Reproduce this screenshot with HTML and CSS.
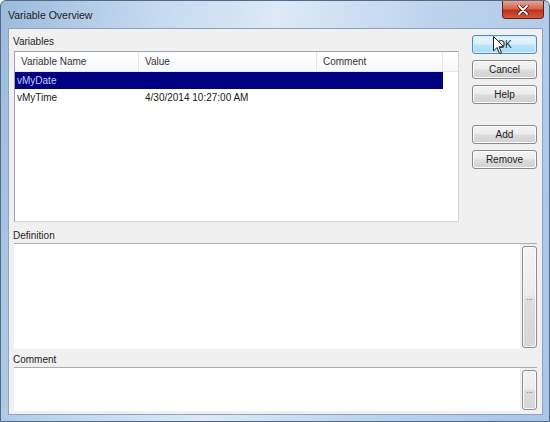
FILE: index.html
```html
<!DOCTYPE html>
<html lang="en">
<head>
    <meta charset="UTF-8">
    <title>Variable Overview</title>
    <link rel="stylesheet" href="styles.css">
</head>
<body>
    <div class="window">
        <div class="titlebar">
            <span class="title">Variable Overview</span>
            <span class="close">
                <svg width="12" height="10" viewBox="0 0 12 10">
                    <path d="M2 1 L10 9 M10 1 L2 9" stroke="#3a1010" stroke-width="3.2" stroke-linecap="round"/>
                    <path d="M2 1 L10 9 M10 1 L2 9" stroke="#fff" stroke-width="1.8" stroke-linecap="round"/>
                </svg>
            </span>
        </div>

        <div class="client">
            <div class="upper">
                <div class="vars">
                    <div class="label">Variables</div>
                    <div class="listview">
                        <div class="lv-header">
                            <div class="col c1">Variable Name</div>
                            <div class="col c2">Value</div>
                            <div class="col c3">Comment</div>
                            <div class="col c4"></div>
                        </div>
                        <div class="lv-row selected">
                            <div class="cell c1">vMyDate</div>
                            <div class="cell c2"></div>
                            <div class="cell c3"></div>
                        </div>
                        <div class="lv-row">
                            <div class="cell c1">vMyTime</div>
                            <div class="cell c2">4/30/2014 10:27:00 AM</div>
                            <div class="cell c3"></div>
                        </div>
                    </div>
                </div>
                <div class="buttons">
                    <button class="btn default">OK</button>
                    <button class="btn">Cancel</button>
                    <button class="btn">Help</button>
                    <button class="btn add">Add</button>
                    <button class="btn">Remove</button>
                </div>
            </div>

            <div class="label section def-label">Definition</div>
            <div class="editor definition">
                <div class="edit-area"></div>
                <div class="edit-side"><button class="dots">...</button></div>
            </div>

            <div class="label section">Comment</div>
            <div class="editor comment">
                <div class="edit-area"></div>
                <div class="edit-side"><button class="dots">...</button></div>
            </div>
        </div>

        <!-- mouse pointer resting on the OK button -->
        <svg class="pointer" width="12" height="19" viewBox="0 0 12 19">
            <path d="M0.5 0.5 L0.5 15 L4 11.5 L6.5 17.5 L8.5 16.6 L6 10.8 L10.8 10.8 Z" fill="#fff" stroke="#222" stroke-width="1" stroke-linejoin="round"/>
        </svg>
    </div>
</body>
</html>
```

FILE: styles.css
```css
body {
    margin: 0;
    padding: 0;
    background-color: #ffffff;
    font-family: "Liberation Sans", Arial, sans-serif;
    font-size: 10px;
    color: #1a1a1a;
}
.window {
    position: relative;
    width: 550px;
    height: 422px;
    box-sizing: border-box;
    border: 1px solid #4e6a8c;
    border-radius: 6px 6px 0 0;
    background: linear-gradient(100deg, #9dbbdc 0%, #c4d9ef 25%, #dde9f6 45%, #bdd3ec 70%, #a9c6e6 100%);
    display: flex;
    flex-direction: column;
}
.titlebar {
    height: 27px;
    display: flex;
    align-items: flex-start;
    justify-content: space-between;
    padding-left: 7px;
}
.title {
    margin-top: 8px;
    font-size: 10.5px;
    color: #1b1b1b;
}
.close {
    width: 42px;
    height: 18px;
    margin-right: 5px;
    box-sizing: border-box;
    border: 1px solid #6b1a10;
    border-top: none;
    border-radius: 0 0 4px 4px;
    background: linear-gradient(#e8a493 0%, #d5644c 45%, #bf3219 55%, #cf5a3c 100%);
    display: flex;
    align-items: center;
    justify-content: center;
}
.client {
    flex: 1;
    margin: 0 6px 6px 7px;
    border: 1px solid #8da2bc;
    background-color: #f0f0f0;
    padding: 0 5px 0 4px;
    display: flex;
    flex-direction: column;
}
.upper {
    display: flex;
    gap: 13px;
}
.vars {
    flex: 1;
    padding-top: 7px;
}
.label {
    height: 12px;
    line-height: 12px;
    color: #1e1e1e;
    margin-bottom: 3px;
}
.section {
    margin-top: 5px;
    margin-bottom: 1px;
}
.def-label {
    margin-top: 8px;
    margin-bottom: 1px;
}
.listview {
    margin-left: 1px;
    height: 171px;
    box-sizing: border-box;
    border: 1px solid #a0a5ad;
    border-right-color: #d6d6d6;
    border-bottom-color: #d6d6d6;
    background-color: #ffffff;
}
.lv-header {
    display: flex;
    height: 19px;
    border-bottom: 1px solid #e4e6ea;
    background: linear-gradient(#ffffff, #f7f8fa);
}
.lv-header .col {
    box-sizing: border-box;
    padding-left: 6px;
    line-height: 19px;
    border-right: 1px solid #e3e5e8;
    color: #333;
}
.c1 { width: 124px; }
.c2 { width: 178px; }
.c3 { width: 126px; }
.lv-header .c4 {
    flex: 1;
    border-right: none;
}
.lv-row {
    display: flex;
    height: 17px;
    line-height: 17px;
}
.lv-row .cell {
    box-sizing: border-box;
    padding-left: 6px;
}
.lv-row .cell.c1 {
    padding-left: 2px;
}
.lv-row.selected {
    width: 428px;
    background-color: #000080;
    color: #c8ceff;
}
.buttons {
    width: 65px;
    padding-top: 6px;
    display: flex;
    flex-direction: column;
    gap: 6px;
}
.btn {
    height: 19px;
    padding: 0;
    font-family: "Liberation Sans", Arial, sans-serif;
    font-size: 10px;
    color: #1b1b1b;
    border: 1px solid #8a8a8a;
    border-radius: 3px;
    background: linear-gradient(#f4f4f4 0%, #ececec 48%, #dcdcdc 52%, #d2d2d2 100%);
    box-shadow: inset 0 0 0 1px #fbfbfb;
}
.btn.default {
    border-color: #4f8bbd;
    background: linear-gradient(#e8f5fc 0%, #d9effc 48%, #bde4f9 52%, #a9dbf6 100%);
    box-shadow: inset 0 0 0 1px #d6eefc;
}
.btn.add {
    margin-top: 15px;
}
.editor {
    display: flex;
    margin-left: 1px;
    border-top: 1px solid #a9adb3;
}
.edit-area {
    flex: 1;
    background-color: #ffffff;
}
.edit-side {
    width: 17px;
    padding: 2px 0 1px 2px;
    box-sizing: border-box;
    display: flex;
}
.dots {
    flex: 1;
    padding: 0;
    font-family: "Liberation Sans", Arial, sans-serif;
    font-size: 8px;
    color: #555;
    border: 1px solid #8e8e8e;
    border-radius: 3px;
    background: linear-gradient(#f4f4f4 0%, #ececec 48%, #dedede 52%, #d6d6d6 100%);
    box-shadow: inset 0 0 0 1px #fafafa;
}
.definition {
    height: 105px;
}
.comment {
    height: 43px;
}
.pointer {
    position: absolute;
    left: 492px;
    top: 35px;
}
```
